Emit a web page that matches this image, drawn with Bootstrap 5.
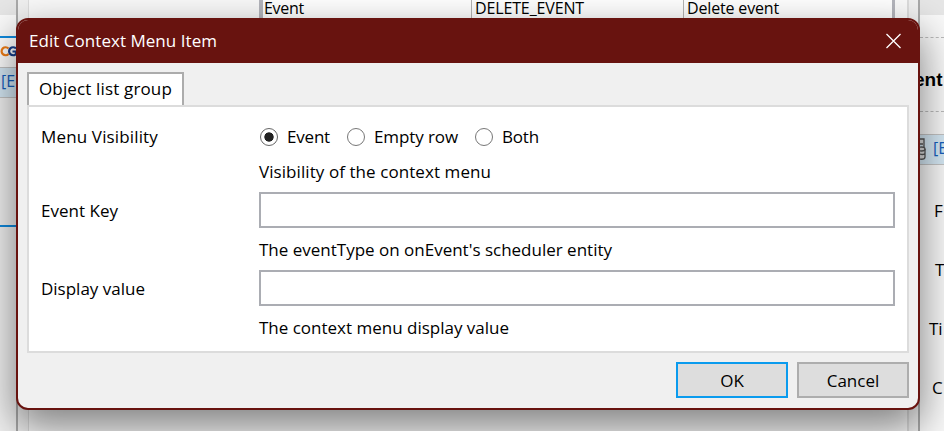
<!DOCTYPE html>
<html lang="en">
<head>
<meta charset="utf-8">
<title>Edit Context Menu Item</title>
<link href="https://cdn.jsdelivr.net/npm/bootstrap@5.3.0/dist/css/bootstrap.min.css" rel="stylesheet">
<style>
body{width:944px;height:431px;background:#f2f2f2;color:#000;font:17px/24px "Open Sans","Noto Sans",sans-serif;white-space:nowrap}
.desk-left{left:0;top:0;width:16px;height:431px;background:#f2f2f2}
.strip-top{height:15px;background:#e6e6e6}
.strip-tab{height:23px;border-bottom:2px solid #0f8ade;background:#fafafa}
.strip-logo{height:29px;background:#fff}
.strip-row{height:31px;background:#d6e9f5;border-top:1px solid #c4c4c4;border-bottom:1px solid #c4c4c4;color:#1560bd;line-height:27px;font-size:16px;padding-left:1px}
.strip-body{height:129px;border-bottom:2px solid #0f8ade}
.desk-right{left:920px;top:0;width:24px;height:431px;background:#f9f9f9}
.right-top{height:15px;background:#e6e6e6}
.right-rule{height:23px;border-bottom:1px dashed #bbb}
.right-title{height:74px;border-bottom:1px dashed #bbb;font:bold 19px/84px "Liberation Sans",sans-serif}
.right-title span{margin-left:-6px}
.right-gap{height:22px}
.right-row{height:31px;background:#d6e9f5;border-top:1px solid #c4c4c4;border-bottom:1px solid #c4c4c4;color:#1560bd;line-height:27px;font-size:16px}
.right-labels{padding-top:16px}
.right-labels div{height:59px;line-height:59px}
.ind-f{padding-left:14px}.ind-t{padding-left:15px}.ind-ti{padding-left:9px}.ind-c{padding-left:12px}
.parent-window{left:16px;top:0;width:904px;height:431px;background:#f0f0f0;border:solid #a9a9a9;border-width:0 2px}
.parent-page{margin:0 9px 0 10px;height:431px;background:#f9f9f9;border:solid #dcdcdc;border-width:0 2px 0 1px}
.parent-grid{margin-left:230px;width:636px;height:18px;border:solid #b4b5bc;border-width:0 3px 0 4px;background:#fff;line-height:16px;font-size:16px}
.grid-cell{border-right:1px solid #b4b4b4;height:18px;padding-left:1px}
.cell-kind{width:209px}
.cell-key{width:212px;padding-left:3px}
.cell-text{padding-left:3px}
.dialog-box{left:16px;top:18px;width:904px;height:392px;border:2px solid #68130f;border-radius:12px;background:#f0f0f0;box-shadow:0 16px 40px 2px rgba(0,0,0,.48)}
.title-strip{height:43px;background:#68130f;color:#fff;padding:0 16px 2px 11px}
.title-strip svg{margin-top:1px}
.tab-head{width:157px;height:34px;margin:9px 0 0 9px;border:2px solid #acacac;border-bottom:0;background:#fff;padding-left:10px;line-height:29px}
.tab-page{margin:-1px 9px 0;height:248px;border:2px solid #dcdcdc;background:#fff;padding-left:12px}
.label-col{width:218px}
label.label-col{padding-top:2px}
.field-col{width:636px}
.line-radio{height:60px;padding-top:18px}
.choice-set{gap:16px}
.field-col,.choice-set{height:24px}
.line-hint{height:25px;margin-top:-7px;margin-bottom:7px}
.line-field{height:36px}
.hint{height:42px;padding-top:10px}
.text-field{width:636px;height:36px;border:2px solid #abadb3;border-radius:0;padding:0 8px}
.text-field:focus{box-shadow:none}
.radio-mark{appearance:none;width:18px;height:18px;border:1.5px solid #777;border-radius:50%;margin:0 9px 0 1px;background:#fff}
.radio-mark:checked{background:radial-gradient(circle,#222 4.3px,#fff 5px);border-color:#666}
.dlg-btn{width:112px;height:36px;padding:1px 0 0;border:2px solid #adadad;border-radius:0;background:#ddd;font-size:17px;line-height:32px;color:#000}
.dlg-btn.primary-action{border-color:#0a9bee}
.foot{height:36px;margin:9px 9px 0;gap:9px}
</style>
</head>
<body class="position-relative overflow-hidden m-0">
<div class="desk-left position-absolute overflow-hidden">
  <div class="strip-top"></div><div class="strip-tab"></div>
  <div class="strip-logo"><svg class="d-block" width="16" height="29" fill="none" stroke-width="2.200"><path d="M8.500 10.500A4 4 0 1 0 8.500 16" stroke="#ef7d16"/><path d="M16 10.500A4 4 0 1 0 16 16V13.500H12.500" stroke="#173f8c"/></svg></div>
  <div class="strip-row">[E</div><div class="strip-body"></div>
</div>
<div class="desk-right position-absolute overflow-hidden">
  <div class="right-top"></div><div class="right-rule"></div>
  <div class="right-title"><span>ent</span></div><div class="right-gap"></div>
  <div class="right-row d-flex"><svg width="13" height="29" class="flex-shrink-0" fill="#ddd" stroke="#555" stroke-width="1.300"><path d="M-4 4H4V12M-4 9H3"/><path d="M-2 14V22C-2 25 5 25 5 22V14M-2 18C0 20 5 20 5 18"/><ellipse cx="1.500" cy="14" rx="3.500" ry="2"/></svg><span>[E</span></div>
  <div class="right-labels"><div class="ind-f">F</div><div class="ind-t">T</div><div class="ind-ti">Ti</div><div class="ind-c">C</div></div>
</div>
<div class="parent-window position-absolute"><div class="parent-page">
  <div class="parent-grid d-flex overflow-hidden">
    <div class="grid-cell cell-kind"><span data-w="40">Event</span></div><div class="grid-cell cell-key"><span data-w="109">DELETE_EVENT</span></div><div class="cell-text"><span data-w="92">Delete event</span></div>
  </div>
</div></div>
<main class="dialog-box position-absolute overflow-hidden">
  <header class="title-strip d-flex align-items-center justify-content-between"><span data-w="188">Edit Context Menu Item</span>
    <svg width="17" height="17" stroke="#fff" stroke-width="1.300"><path d="M1.500 1L15.500 15M15.500 1L1.500 15"/></svg>
  </header>
  <div class="tab-head"><span data-w="133">Object list group</span></div>
  <section class="tab-page">
    <div class="line-radio d-flex">
      <div class="label-col"><span data-w="117">Menu Visibility</span></div>
      <div class="field-col choice-set d-flex align-items-center">
        <label class="d-flex align-items-center"><input class="radio-mark" type="radio" name="visibility" checked><span data-w="43">Event</span></label>
        <label class="d-flex align-items-center"><input class="radio-mark" type="radio" name="visibility"><span data-w="84">Empty row</span></label>
        <label class="d-flex align-items-center"><input class="radio-mark" type="radio" name="visibility"><span data-w="37">Both</span></label>
      </div>
    </div>
    <div class="d-flex line-hint"><div class="label-col"></div><span data-w="232">Visibility of the context menu</span></div>
    <div class="d-flex line-field align-items-center"><label class="label-col" for="key"><span data-w="77">Event Key</span></label><input id="key" class="text-field form-control flex-shrink-0"></div>
    <div class="d-flex hint"><div class="label-col"></div><span data-w="353">The eventType on onEvent's scheduler entity</span></div>
    <div class="d-flex line-field align-items-center"><label class="label-col" for="display"><span data-w="104">Display value</span></label><input id="display" class="text-field form-control flex-shrink-0"></div>
    <div class="d-flex hint"><div class="label-col"></div><span data-w="250">The context menu display value</span></div>
  </section>
  <footer class="foot d-flex justify-content-end"><button class="dlg-btn btn primary-action">OK</button><button class="dlg-btn btn">Cancel</button></footer>
</main>
<script src="https://cdn.jsdelivr.net/npm/bootstrap@5.3.0/dist/js/bootstrap.bundle.min.js"></script>
<script>
/* Fit each caption to its designed width through letter spacing. */
document.querySelectorAll('[data-w]').forEach(function(el){
  var spare = el.dataset.w - el.getBoundingClientRect().width;
  el.style.letterSpacing = (spare / el.textContent.length) + 'px';
});
</script>
</body>
</html>
